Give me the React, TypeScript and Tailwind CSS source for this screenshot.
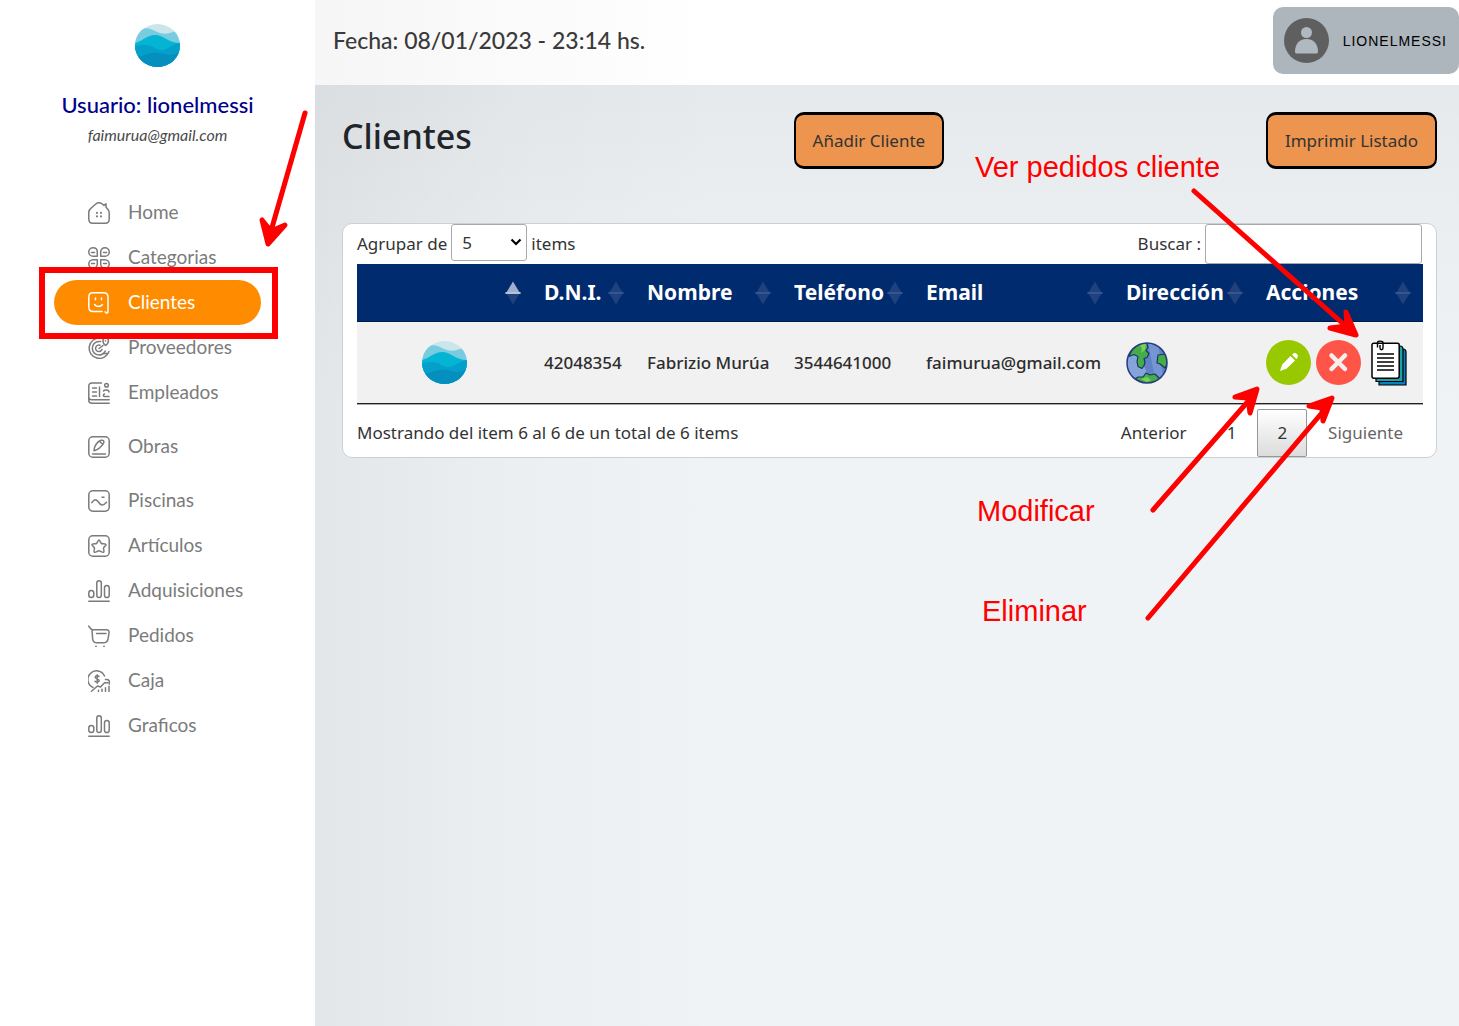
import type { ReactNode } from 'react';

function WaveLogo() {
  return (
    <svg viewBox="0 0 45 43" className="h-[43px] w-[45px]" aria-hidden="true">
      <clipPath id="logoClip">
        <ellipse cx="22.5" cy="21.5" rx="22.5" ry="21.5" />
      </clipPath>
      <g clipPath="url(#logoClip)">
        <rect width="45" height="43" fill="#cbe6ea" />
        <path d="M0 9C5 4 12 3 18 6s11 5 17 3 8-3 10-2v36H0z" fill="#79cce0" />
        <path d="M0 19C8 17 12 11 20 11c9 0 13 8 25 8v24H0z" fill="#04b4d3" />
        <path d="M0 22c6-1 12-2 18 1 6 4 10 4 15 1 4-2 6-4 12-5v24H0z" fill="#049fca" />
        <path d="M0 33c7 0 10-3 17-4s11 1 17 2c5 0 7-2 11-2v14H0z" fill="#048fbf" />
      </g>
    </svg>
  );
}

function Glyph({ children }: { children: ReactNode }) {
  return (
    <svg
      viewBox="0 0 22 22"
      className="h-[22px] w-[22px] shrink-0"
      fill="none"
      stroke="currentColor"
      strokeWidth="1.5"
      strokeLinecap="round"
      strokeLinejoin="round"
      aria-hidden="true"
    >
      {children}
    </svg>
  );
}

const homeIcon = (
  <Glyph>
    <path d="M.8 10.500c0-2 .8-3.200 2.200-4.300L7.500 2.200c2-1.700 5-1.700 7 0l1.500 1.200 2-1.600v3.500l1 1c1.500 1.200 2.200 2.500 2.200 4.500v6.400c0 2.600-1.400 4-4 4H4.800c-2.600 0-4-1.400-4-4z" />
    <path d="M9 10.700v.2M13 10.700v.2M9 14.300v.2M13 14.300v.2" strokeWidth="2" />
  </Glyph>
);
const categoriesIcon = (
  <Glyph>
    <path d="M5 .8c2.600 0 4.300 1.700 4.300 4.200v4.300H5A4.250 4.250 0 1 1 5 .8zM17 .8a4.250 4.250 0 1 1 0 8.500h-4.300V5C12.700 2.500 14.400.8 17 .8zM5 12.700h4.300V17A4.250 4.250 0 1 1 5 12.700zM12.700 12.700H17a4.250 4.250 0 1 1-4.300 4.300z" />
    <path d="M3.500 5.500h3M15.500 5.500h3M3.500 16.500h3M15.500 16.500h3" />
  </Glyph>
);
const clientsIcon = (
  <Glyph>
    <path d="M14 19.500H5c-2.700 0-4.200-1.500-4.200-4.200V5c0-2.700 1.500-4.200 4.200-4.200h10.500c2.700 0 4.500 1.500 4.500 4.200v14.500c0 2-2.500 2.200-2.800.2" />
    <path d="M7.500 6v1.800M13.500 6v1.800M6.500 12.500c2 2.700 6 2.700 8 0" />
  </Glyph>
);
const providersIcon = (
  <Glyph>
    <path d="M12 1A10.200 10.200 0 1 0 21 14.500" />
    <path d="M12.500 4.600a6.800 6.800 0 1 0 4.800 9.500" />
    <path d="M12 8.200a3.300 3.300 0 1 0 2 4.200M11 11.500l4-3" />
    <path d="M17.600 8.500c-4-3-3-7.700 0-7.700s4.500 4 0 7.700zM17.500 3.700v.2M15.500 16.500h3.500" />
  </Glyph>
);
const employeesIcon = (
  <Glyph>
    <path d="M13.500 1H4C2 1 .8 2.200.8 4v10.500c0 2.200 1.200 3.300 3.200 3.300h17.200M.8 15v3.500c0 1.700 1 2.700 3.200 2.700h17.200" />
    <path d="M4.500 6h4M4.500 10h4M4.500 14h4M11.500 5v9.500M21 14.500h-4.500c-1.500 0-1.500-2 0-2.500M15.500 9c1-1.500 5.500-1.500 5.500 1" />
    <circle cx="18.500" cy="3.300" r="1.800" />
  </Glyph>
);
const worksIcon = (
  <Glyph>
    <rect x=".8" y=".8" width="20.400" height="20.400" rx="4" />
    <path d="M6 14.800c-.3-4 3.200-9.300 7-10.500 2.200-.5 3.700 1 2.500 3-1.800 3-5.500 6.200-9.500 7.500zM11.500 5.500l3 2.500M4.500 18h13" />
  </Glyph>
);
const poolsIcon = (
  <Glyph>
    <rect x=".8" y=".8" width="20.400" height="20.400" rx="4" />
    <path d="M3.800 12.700c2.500-3.700 4.200-4 6.200-1.200 2.800 4.500 5.200 4.500 8.500.7M14 7.300h2" />
  </Glyph>
);
const articlesIcon = (
  <Glyph>
    <rect x=".8" y=".8" width="20.400" height="20.400" rx="4" />
    <path d="M11 5c1 0 1.600 3 2.500 3.500S18 8.400 18 9.700c0 1-2.400 2.300-2.500 3.300s1.200 3.600 0 4.300c-1 .5-3.200-1.500-4.500-1.500s-3.500 2-4.500 1.500c-1.200-.7.100-3.300 0-4.300S4 10.700 4 9.700c0-1.300 3.600-.7 4.500-1.200S10 5 11 5z" />
  </Glyph>
);
const chartIcon = (
  <Glyph>
    <rect x=".8" y="10.500" width="5" height="7" rx="2.500" />
    <rect x="8.800" y=".8" width="4.500" height="16.700" rx="2.250" />
    <rect x="16.500" y="5.500" width="4.700" height="12" rx="2.350" />
    <path d="M.8 21.200h20.400" />
  </Glyph>
);
const cartIcon = (
  <Glyph>
    <path d="M.7 1C1.500 3 3 3.500 4 4.800l.6 8.700c.3 3 1.500 4.300 4.200 4.300h6.500c3 0 4.200-1 4.700-3.700l1-6c.3-2.300-.7-3.300-2.700-3.300H4M8.500 8.500h9.500" />
    <path d="M8 21.300v.2M16 21.300v.2" strokeWidth="1.800" />
  </Glyph>
);
const cashIcon = (
  <Glyph>
    <path d="M5 17.500A8.700 8.700 0 1 1 16.500 6M17.500 9.500c3.500-.5 4.500 1.500 3.700 4.500M3.500 21.200l6-5.200 3 1 4-4.200h3.300M10.500 21.300v-1M14 21.300v-2M17.500 21.300v-3.500M21 21.300v-5" />
    <path d="M11 6.500c-1-1.300-3.800-1-3.800.8 0 2 4 1.200 4 3.200 0 1.800-3 2-4.200.7M9.200 4.800v8.500" />
  </Glyph>
);

const menu = [
  { label: 'Home', icon: homeIcon, size: 'h-[45px]' },
  { label: 'Categorias', icon: categoriesIcon, size: 'h-[45px]' },
  { label: 'Clientes', icon: clientsIcon, size: 'h-[45px]', active: true },
  { label: 'Proveedores', icon: providersIcon, size: 'h-[45px]' },
  { label: 'Empleados', icon: employeesIcon, size: 'h-[45px]' },
  { label: 'Obras', icon: worksIcon, size: 'h-[63px]' },
  { label: 'Piscinas', icon: poolsIcon, size: 'h-[45px]' },
  { label: 'Artículos', icon: articlesIcon, size: 'h-[45px]' },
  { label: 'Adquisiciones', icon: chartIcon, size: 'h-[45px]' },
  { label: 'Pedidos', icon: cartIcon, size: 'h-[45px]' },
  { label: 'Caja', icon: cashIcon, size: 'h-[45px]' },
  { label: 'Graficos', icon: chartIcon, size: 'h-[45px]' },
];

function Sidebar() {
  return (
    <aside className="w-[315px] shrink-0 bg-white font-['Lato',sans-serif]">
      <div className="flex flex-col items-center pt-6">
        <WaveLogo />
        <p className="mt-[26px] text-[22px] leading-6 font-medium text-[#00008b]">Usuario: lionelmessi</p>
        <p className="mt-1 text-base leading-7 text-[#4a4a4a] italic">faimurua@gmail.com</p>
      </div>
      <nav className="mt-[41px] px-[54px]">
        <ul>
          {menu.map((item) => (
            <li key={item.label}>
              <a
                href="#"
                aria-current={item.active ? 'page' : undefined}
                className={`flex items-center gap-[18px] rounded-full pl-[34px] text-[19px] ${item.size} ${
                  item.active ? 'bg-[#ff8c00] text-white' : 'text-[#7b7b7b]'
                }`}
              >
                {item.icon}
                {item.label}
              </a>
            </li>
          ))}
        </ul>
      </nav>
    </aside>
  );
}

function Header() {
  return (
    <header className="flex h-[85px] items-center justify-between bg-linear-to-r from-[#f6f6f6] to-white to-35% pb-1 pl-[18px]">
      <p className="font-['Lato',sans-serif] text-[23px] font-medium text-[#3a3a3a]">
        Fecha: 08/01/2023 - 23:14 hs.
      </p>
      <button
        type="button"
        className="flex h-[67px] items-center gap-3.5 rounded-[10px] bg-[#adb5bd] pr-3 pl-[11px] font-['Liberation_Sans',sans-serif] text-sm tracking-[1px] text-black"
      >
        <svg viewBox="0 0 45 45" className="h-[45px] w-[45px]" aria-hidden="true">
          <circle cx="22.500" cy="22.500" r="22.500" fill="#5f5f5f" />
          <circle cx="22.500" cy="14.500" r="5.500" fill="#b1b9c0" />
          <path d="M11 33.500c0-8 5-12.500 11.500-12.500S34 25.500 34 33.500c0 1.500-.5 2-2 2H13c-1.500 0-2-.5-2-2z" fill="#b1b9c0" />
        </svg>
        LIONELMESSI
      </button>
    </header>
  );
}

function SortMark({ up }: { up?: boolean }) {
  return (
    <svg viewBox="0 0 16 24" className="h-6 w-4 shrink-0" aria-hidden="true">
      <path d="M8 23.500.5 11h15z" fill="#1f427f" />
      <path d="M8 .5 15.500 13H.5z" fill={up ? '#a0afce' : '#1f427f'} />
      <path d="M.5 11h15v2H.5z" fill={up ? '#b4c0da' : '#365590'} />
    </svg>
  );
}

function Globe() {
  return (
    <svg viewBox="0 0 42 42" className="h-[42px] w-[42px]" aria-hidden="true">
      <clipPath id="globeClip">
        <circle cx="21" cy="21" r="20" />
      </clipPath>
      <g clipPath="url(#globeClip)">
        <rect width="42" height="42" fill="#5f83c5" />
        <path d="M0 0h16v20l10 22H0z" fill="#86a4dc" />
        <path d="M22 0h10l6 42h-8z" fill="#7596d3" />
        <g fill="#45ad48" stroke="#1c3468" strokeWidth="1.200" strokeLinejoin="round">
          <path d="M4 12C7 5 14 0 21 1.500l1 4-2 3 3 3-2 4-3 1 1 4-1 3-2 3-4-2-1-5 1-5-4-2-5 2z" />
          <path d="M32 13l8-1 1 10-2 4-5-4-3-1z" />
          <path d="M9 37l3-2 5 0 3-4 4 2 5-1 4 4 1 5-12 2z" />
        </g>
        <path d="M14 3l6-1-1 6-4 3 1-4z" fill="#7bd05a" />
        <path d="M15 37l6-2 4 3-4 2z" fill="#7bd05a" />
      </g>
      <circle cx="21" cy="21" r="20" fill="none" stroke="#263c7d" strokeWidth="1.500" />
    </svg>
  );
}

function EditIcon() {
  return (
    <svg viewBox="0 0 45 45" className="h-[45px] w-[45px]" aria-hidden="true">
      <circle cx="22.500" cy="22.500" r="22.500" fill="#98c800" />
      <path d="M14 31l2.200-6.500L24.500 16l4.500 4.500-8.500 8.300zM26 14.700l1.300-1.200c2.500-1.500 5.700 1.500 4.200 4.200L30.300 19z" fill="#fff" />
    </svg>
  );
}

function DeleteIcon() {
  return (
    <svg viewBox="0 0 45 45" className="h-[45px] w-[45px]" aria-hidden="true">
      <circle cx="22.500" cy="22.500" r="22.500" fill="#ff5549" />
      <path d="M15.500 15.500l13.500 13.500M29 15.500L15.500 29" stroke="#f4f0f0" strokeWidth="4.500" strokeLinecap="round" />
    </svg>
  );
}

function OrdersIcon() {
  return (
    <svg viewBox="0 0 36 46" className="h-[46px] w-9" stroke="#000" strokeWidth="1.200" strokeLinejoin="round" aria-hidden="true">
      <path d="M8 9h24c2 0 3 1 3 3v33H8z" fill="#0a7fc0" />
      <path d="M5 6h24c2 0 3 1 3 3v32.500H5z" fill="#1aa3a8" />
      <path d="M1 5c0-1 .7-1.700 1.700-1.700h23.600c1 0 1.900.7 1.900 1.700v31c0 1.500-.7 2.300-2.200 2.300H2.700C1.700 38.300 1 37.500 1 36.500z" fill="#fff" strokeWidth="1.500" />
      <path d="M6 14h17M6 18h17M6 22h17M6 26h17M6 30h17" fill="none" strokeWidth="1.500" />
      <path d="M6.500 7.500v-5C6.500.6 12 .6 12 2.500V8c0 2.300-3 2.300-3 0V5" fill="none" strokeWidth="1.400" />
    </svg>
  );
}

const columns = [
  { label: '', width: 'w-[169px]', pad: 'pr-[5px]', up: true },
  { label: 'D.N.I.', width: 'w-[103px]', pad: 'pr-[5px]' },
  { label: 'Nombre', width: 'w-[147px]', pad: 'pr-[5px]' },
  { label: 'Teléfono', width: 'w-[132px]', pad: 'pr-[5px]' },
  { label: 'Email', width: 'w-[200px]', pad: 'pr-[5px]' },
  { label: 'Dirección', width: 'w-[140px]', pad: 'pr-[5px]' },
  { label: 'Acciones', width: 'w-[175px]', pad: 'pr-3' },
];

function ClientsTable() {
  return (
    <table className="w-full table-fixed border-separate border-spacing-0 border-b border-[#a8a8a8] text-left whitespace-nowrap">
      <thead className="bg-[#002b6f] text-[21px] text-white">
        <tr className="h-[58px]">
          {columns.map((column) => (
            <th key={column.width} className={`border-b border-[#001b4a] p-0 font-bold ${column.width}`}>
              <button
                type="button"
                className={`flex w-full items-center justify-between pl-[18px] ${column.pad}`}
                aria-label={column.label || 'Logo'}
              >
                <span>{column.label}</span>
                <SortMark up={column.up} />
              </button>
            </th>
          ))}
        </tr>
      </thead>
      <tbody>
        <tr className="h-[82px] bg-[#f1f1f1] text-[17px] font-medium text-[#2d2d2d] *:border-b *:border-[#222]">
          <td>
            <div className="flex justify-center pl-1.5">
              <WaveLogo />
            </div>
          </td>
          <td className="pl-[18px]">42048354</td>
          <td className="pl-[18px]">Fabrizio Murúa</td>
          <td className="pl-[18px]">3544641000</td>
          <td className="pl-[18px]">faimurua@gmail.com</td>
          <td className="pl-[18px]">
            <a href="#" aria-label="Ver dirección" className="block w-[42px]">
              <Globe />
            </a>
          </td>
          <td className="pl-[18px]">
            <div className="flex items-center gap-[5px]">
              <button type="button" aria-label="Modificar">
                <EditIcon />
              </button>
              <button type="button" aria-label="Eliminar">
                <DeleteIcon />
              </button>
              <button type="button" aria-label="Ver pedidos" className="ml-[5px]">
                <OrdersIcon />
              </button>
            </div>
          </td>
        </tr>
      </tbody>
    </table>
  );
}

function ClientsPanel() {
  return (
    <section className="mt-[54px] rounded-[10px] border border-[#cdd0d2] bg-white px-3.5 text-[17px] text-[#333]">
      <div className="flex h-10 items-center justify-between">
        <div className="flex items-center gap-1">
          <label htmlFor="page-size">Agrupar de</label>
          <div className="relative mb-[3px]">
            <select
              id="page-size"
              defaultValue="5"
              className="block h-[37px] w-[76px] appearance-none rounded-[3px] border border-[#aaa] bg-white pl-2.5"
            >
              <option>5</option>
              <option>10</option>
              <option>25</option>
            </select>
            <svg viewBox="0 0 12 8" className="pointer-events-none absolute top-3.5 right-[5px] h-2 w-3" aria-hidden="true">
              <path d="M1.500 1.500 6 6l4.500-4.500" fill="none" stroke="#000" strokeWidth="2.200" />
            </svg>
          </div>
          <span>items</span>
        </div>
        <div className="flex items-center gap-1">
          <label htmlFor="search">Buscar :</label>
          <input id="search" type="search" className="h-10 w-[217px] rounded-[3px] border border-[#aaa] bg-white px-2" />
        </div>
      </div>
      <ClientsTable />
      <div className="flex h-[52px] items-center justify-between pt-1">
        <p>Mostrando del item 6 al 6 de un total de 6 items</p>
        <nav className="flex items-center gap-0.5">
          <button type="button" className="h-12 px-[19px]">Anterior</button>
          <button type="button" className="h-12 px-[19px]">1</button>
          <button type="button" aria-current="page" className="h-12 rounded-[2px] border border-[#979797] bg-linear-to-b from-white to-[#dcdcdc] px-[19px]">
            2
          </button>
          <button type="button" className="h-12 px-[19px] text-[#666]">Siguiente</button>
        </nav>
      </div>
    </section>
  );
}

function PointerNotes() {
  return (
    <div className="pointer-events-none absolute top-0 right-0 h-[640px] w-[499px] font-['Liberation_Sans',sans-serif] text-[29px] leading-8 text-[#f00]">
      <p className="absolute top-[151px] left-[15px]">Ver pedidos cliente</p>
      <p className="absolute top-[495px] left-[17px]">Modificar</p>
      <p className="absolute top-[595px] left-[22px]">Eliminar</p>
      <svg viewBox="960 0 499 640" className="h-full w-full" fill="none" stroke="#f00" strokeWidth="5" strokeLinecap="round" strokeLinejoin="round" aria-hidden="true">
        <path d="M1194 191l155 138" />
        <path d="M1346 312l10 23-26-7 17-2z" fill="#f00" />
        <path d="M1153 510l98-112" />
        <path d="M1235 397l22-8-7 24-2-15z" fill="#f00" />
        <path d="M1148 618l178-210" />
        <path d="M1309 406l23-8-9 23-1-13z" fill="#f00" />
      </svg>
    </div>
  );
}

function MenuHighlight() {
  return (
    <div className="pointer-events-none absolute top-0 left-0 h-[345px] w-[315px]">
      <div className="absolute top-[267px] left-[39px] h-[72px] w-[239px] border-6 border-[#f00]" />
      <svg viewBox="0 0 315 345" className="h-full w-full" fill="none" stroke="#f00" strokeWidth="5" strokeLinecap="round" strokeLinejoin="round" aria-hidden="true">
        <path d="M305 113l-34 118" />
        <path d="M262 220l6 24 17-19-14 6z" fill="#f00" />
      </svg>
    </div>
  );
}

const orangeButton =
  'h-[57px] rounded-[10px] border-x-2 border-y-3 border-black bg-[#ed954e] px-[17px] text-[17px] text-[#333]';

export default function App() {
  return (
    <div className="relative flex min-h-screen min-w-[1180px] bg-white font-['Noto_Sans',sans-serif]">
      <Sidebar />
      <div className="flex min-w-0 flex-1 flex-col">
        <Header />
        <main className="flex-1 bg-[#eff3f6] bg-[linear-gradient(to_right,rgba(0,0,0,0.05),rgba(0,0,0,0.015)_18%,transparent_36%),linear-gradient(to_bottom,rgba(0,0,0,0.04),rgba(0,0,0,0.015)_18%,transparent_36%)] pr-[22px] pl-[27px]">
          <div className="flex items-center justify-between pt-[27px]">
            <h1 className="mb-2.5 text-[34px] leading-10 font-medium text-[#212529]">Clientes</h1>
            <button type="button" className={orangeButton}>
              Añadir Cliente
            </button>
            <button type="button" className={orangeButton}>
              Imprimir Listado
            </button>
          </div>
          <ClientsPanel />
        </main>
      </div>
      <MenuHighlight />
      <PointerNotes />
    </div>
  );
}
